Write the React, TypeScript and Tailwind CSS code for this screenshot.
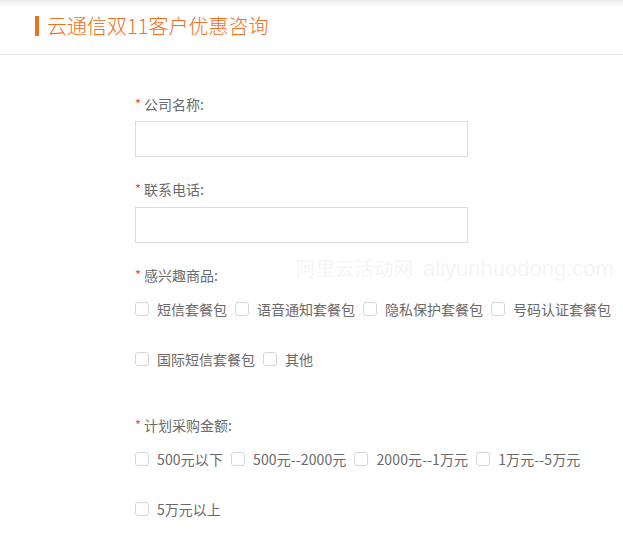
import React from "react";

const FONT = "font-['Microsoft_YaHei','Noto_Sans_CJK_SC',sans-serif]";

const PRODUCTS = ["短信套餐包", "语音通知套餐包", "隐私保护套餐包", "号码认证套餐包", "国际短信套餐包", "其他"];
const BUDGETS = ["500元以下", "500元--2000元", "2000元--1万元", "1万元--5万元", "5万元以上"];

function Label({ text }: { text: string }) {
  return (
    <div className="flex h-5 items-center text-[14px] leading-5 text-[#6a6a6a]">
      <span className="mr-[3px] text-[13px] text-[#e8542c]">*</span>
      <span>{text}:</span>
    </div>
  );
}

function Check({ text }: { text: string }) {
  return (
    <label className="mr-[8px] flex h-5 items-center text-[14px] leading-5 text-[#6a6a6a]">
      <span className="mr-[8px] h-[14px] w-[14px] rounded-[3px] border border-[#d6d6d6] bg-white" />
      <span>{text}</span>
    </label>
  );
}

export default function App() {
  return (
    <div className={`relative h-[534px] w-[623px] overflow-hidden bg-white ${FONT}`}>
      <div className="h-[55px] border-b border-[#e6e6e6] bg-gradient-to-b from-[#ececec] via-white to-white via-[14%]">
        <div className="flex h-full items-center pl-[35px] pb-[2px]">
          <span className="mr-[8px] h-[20px] w-[4px] bg-[#f0701f]" />
          <h1 className="text-[20px] font-light leading-none text-[#f0701f]">云通信双11客户优惠咨询</h1>
        </div>
      </div>

      <div className="pl-[135px] pt-[39px]">
        <Label text="公司名称" />
        <div className="mt-[7px] h-[36px] w-[333px] border border-[#dcdcdc]" />

        <div className="mt-[22px]">
          <Label text="联系电话" />
        </div>
        <div className="mt-[8px] h-[36px] w-[333px] border border-[#dcdcdc]" />

        <div className="mt-[22px]">
          <Label text="感兴趣商品" />
        </div>
        <div className="mt-[14px] flex">
          {PRODUCTS.slice(0, 4).map((p) => (
            <Check key={p} text={p} />
          ))}
        </div>
        <div className="mt-[30px] flex">
          {PRODUCTS.slice(4).map((p) => (
            <Check key={p} text={p} />
          ))}
        </div>

        <div className="mt-[46px]">
          <Label text="计划采购金额" />
        </div>
        <div className="mt-[14px] flex tracking-[0.12px]">
          {BUDGETS.slice(0, 4).map((b) => (
            <Check key={b} text={b} />
          ))}
        </div>
        <div className="mt-[30px] flex">
          <Check text={BUDGETS[4]} />
        </div>
      </div>

      <div className="pointer-events-none absolute left-[296px] top-[256px] flex items-baseline text-[19.5px] leading-6 text-[#f5f5f5]">
        <span>阿里云活动网</span>
        <span className="ml-[10px] font-['Liberation_Sans',sans-serif] text-[22px]">aliyunhuodong.com</span>
      </div>
    </div>
  );
}
